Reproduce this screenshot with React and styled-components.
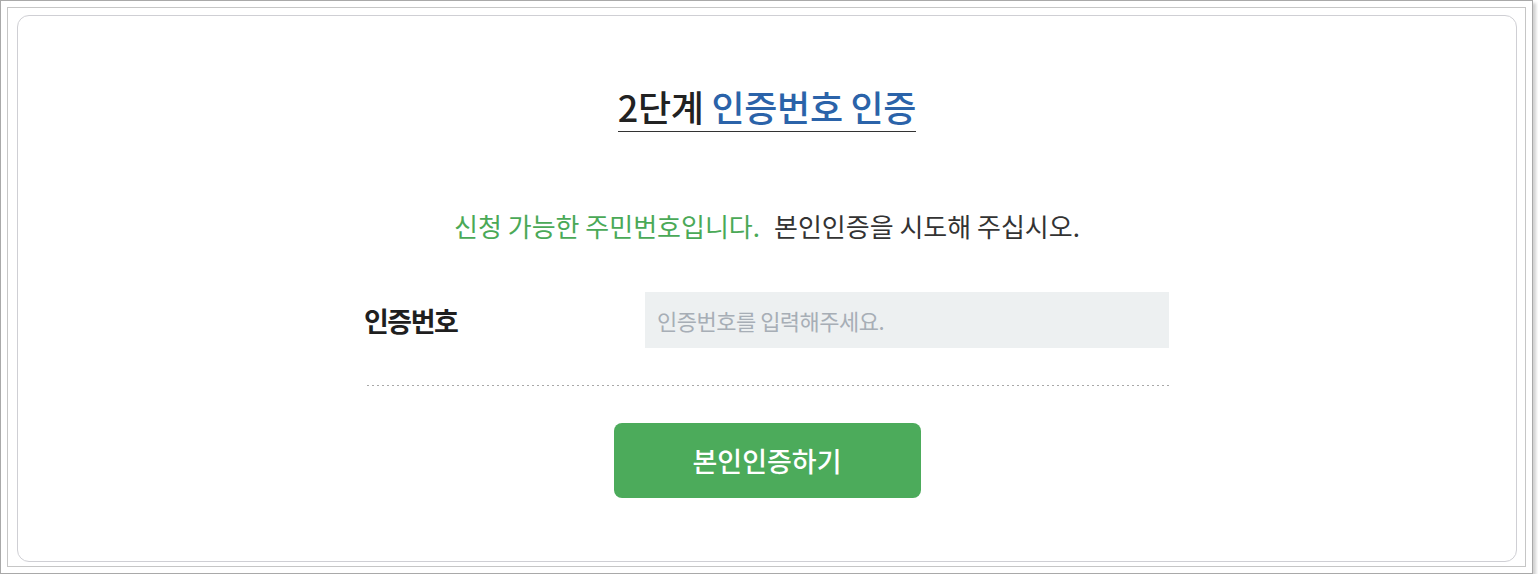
import React from "react";
import styled, { createGlobalStyle } from "styled-components";

const Global = createGlobalStyle`
  html, body { margin: 0; padding: 0; background: #fff; }
  body { font-family: "Noto Sans CJK KR", "Noto Sans", sans-serif; color: #222; }
  * { box-sizing: border-box; }
`;

const Outer = styled.div`
  width: 1533px;
  height: 574px;
  border: 1px solid #a9a9a9;
  box-shadow: 3px 3px 3px rgba(0, 0, 0, 0.18);
  padding: 6px;
`;

const Inner = styled.div`
  height: 100%;
  border: 1px solid #c6c6c6;
  padding: 7px 8px 4px 9px;
`;

const Card = styled.section`
  height: 100%;
  border: 1px solid #cfcfd4;
  border-radius: 12px;
  display: flex;
  flex-direction: column;
  align-items: center;
  padding-top: 66px;
`;

const Title = styled.h2`
  margin: 0;
  font-size: 36px;
  font-weight: 500;
  letter-spacing: -0.3px;
  line-height: 48px;
  padding-bottom: 1px;
  border-bottom: 1px solid #333;
  color: #222;
`;

const Accent = styled.span`
  color: #2b63a9;
`;

const Notice = styled.p`
  margin: 76px 0 0;
  font-size: 26px;
  line-height: 36px;
  letter-spacing: 0;
  color: #333;
`;

const Ok = styled.span`
  color: #4aa957;
  margin-right: 14px;
`;

const Form = styled.div`
  width: 802px;
  margin-top: 48px;
  margin-left: 2px;
`;

const Row = styled.div`
  display: flex;
  align-items: center;
  height: 56px;
`;

const Label = styled.label`
  width: 278px;
  margin-left: -3px;
  margin-right: 3px;
  font-size: 27px;
  font-weight: 700;
  letter-spacing: -1.5px;
  color: #1f1f1f;
`;

const Input = styled.input`
  flex: 1;
  height: 56px;
  border: none;
  outline: none;
  background: #edf0f1;
  padding: 0 12px;
  font-family: inherit;
  font-size: 22px;
  letter-spacing: -0.5px;
  color: #333;
  &::placeholder { color: #a7aeb6; }
`;

const Divider = styled.div`
  height: 1px;
  margin-top: 37px;
  background-image: repeating-linear-gradient(to right, #a8a8a8 0 2px, transparent 2px 5px);
`;

const Button = styled.button`
  margin-top: 37px;
  width: 307px;
  height: 75px;
  border: none;
  border-radius: 8px;
  background: #4cab5b;
  color: #fff;
  font-family: inherit;
  font-size: 27px;
  font-weight: 500;
  letter-spacing: 0;
  cursor: pointer;
`;

export default function App() {
  return (
    <>
      <Global />
      <Outer>
        <Inner>
          <Card>
            <Title>
              2단계 <Accent>인증번호 인증</Accent>
            </Title>
            <Notice>
              <Ok>신청 가능한 주민번호입니다.</Ok>본인인증을 시도해 주십시오.
            </Notice>
            <Form>
              <Row>
                <Label htmlFor="code">인증번호</Label>
                <Input id="code" placeholder="인증번호를 입력해주세요." />
              </Row>
              <Divider />
            </Form>
            <Button>본인인증하기</Button>
          </Card>
        </Inner>
      </Outer>
    </>
  );
}
